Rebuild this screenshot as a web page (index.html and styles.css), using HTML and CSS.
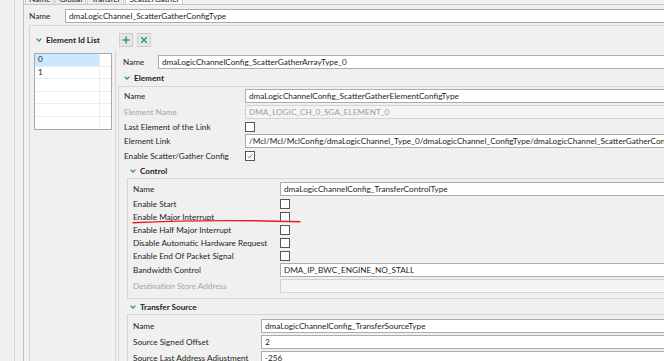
FILE: index.html
```html
<!DOCTYPE html>
<html lang="en">
<head>
    <meta charset="UTF-8">
    <title>ScatterGather</title>
    <link rel="stylesheet" href="styles.css">
</head>
<body>

<div class="main">
    <div class="content">

        <!-- Tabs (cut off at the top) -->
        <div class="tabs">
            <span class="tab">Name</span>
            <span class="tab">Global</span>
            <span class="tab">Transfer</span>
            <span class="tab active">ScatterGather</span>
        </div>

        <div class="top-row">
            <span class="top-label">Name</span>
            <input class="field" type="text" value="dmaLogicChannel_ScatterGatherConfigType" readonly>
        </div>

        <div class="group">
            <div class="group-head">
                <div class="id-heading">
                    <svg class="chev" viewBox="0 0 6 4"><path d="M0.6 0.6 L3 3 L5.4 0.6"/></svg>
                    <span>Element Id List</span>
                </div>
                <button class="tool" type="button">
                    <svg viewBox="0 0 8 8"><path d="M4 0.5 V7.5 M0.5 4 H7.5"/></svg>
                </button>
                <button class="tool" type="button">
                    <svg viewBox="0 0 8 8"><path d="M1.2 1.2 L6.8 6.8 M6.8 1.2 L1.2 6.8"/></svg>
                </button>
            </div>

            <div class="group-body">
                <div class="id-pane">
                    <div class="list">
                        <div class="list-row selected"><span class="cell">0</span><span class="cell2"></span></div>
                        <div class="list-row"><span class="cell">1</span><span class="cell2"></span></div>
                        <div class="list-row"><span class="cell"></span><span class="cell2"></span></div>
                        <div class="list-row"><span class="cell"></span><span class="cell2"></span></div>
                        <div class="list-row"><span class="cell"></span><span class="cell2"></span></div>
                        <div class="list-row"><span class="cell"></span><span class="cell2"></span></div>
                    </div>
                </div>

                <div class="details">
                    <div class="name-row">
                        <span class="name-label">Name</span>
                        <input class="field" type="text" value="dmaLogicChannelConfig_ScatterGatherArrayType_0" readonly>
                    </div>

                    <div class="section element">
                        <div class="heading">
                            <svg class="chev" viewBox="0 0 6 4"><path d="M0.6 0.6 L3 3 L5.4 0.6"/></svg>
                            <span>Element</span>
                        </div>
                        <div class="box">
                            <div class="row"><span class="label w-element">Name</span><input class="field" type="text" value="dmaLogicChannelConfig_ScatterGatherElementConfigType" readonly></div>
                            <div class="row"><span class="label w-element disabled">Element Name</span><input class="field off" type="text" value="DMA_LOGIC_CH_0_SGA_ELEMENT_0" disabled></div>
                            <div class="row cb"><span class="label w-element">Last Element of the Link</span><span class="check"></span></div>
                            <div class="row"><span class="label w-element">Element Link</span><input class="field" type="text" value="/Mcl/Mcl/MclConfig/dmaLogicChannel_Type_0/dmaLogicChannel_ConfigType/dmaLogicChannel_ScatterGatherConfigType/dmaLogicChannelConfig_ScatterGatherArrayType_0" readonly></div>
                            <div class="row cb"><span class="label w-element">Enable Scatter/Gather Config</span><span class="check"><svg viewBox="0 0 10 10"><path d="M2 5.2 L4.2 7.3 L8 2.8"/></svg></span></div>

                            <div class="section sub">
                                <div class="heading">
                                    <svg class="chev" viewBox="0 0 6 4"><path d="M0.6 0.6 L3 3 L5.4 0.6"/></svg>
                                    <span>Control</span>
                                </div>
                                <div class="box">
                                    <div class="row"><span class="label w-control">Name</span><input class="field" type="text" value="dmaLogicChannelConfig_TransferControlType" readonly></div>
                                    <div class="row cb"><span class="label w-control">Enable Start</span><span class="check"></span></div>
                                    <div class="row cb"><span class="label w-control">Enable Major Interrupt</span><span class="check"></span></div>
                                    <div class="row cb"><span class="label w-control">Enable Half Major Interrupt</span><span class="check"></span></div>
                                    <div class="row cb"><span class="label w-control">Disable Automatic Hardware Request</span><span class="check"></span></div>
                                    <div class="row cb"><span class="label w-control">Enable End Of Packet Signal</span><span class="check"></span></div>
                                    <div class="row"><span class="label w-control">Bandwidth Control</span><input class="field" type="text" value="DMA_IP_BWC_ENGINE_NO_STALL" readonly></div>
                                    <div class="row"><span class="label w-control disabled">Destination Store Address</span><input class="field off" type="text" value="" disabled></div>
                                </div>
                            </div>

                            <div class="section sub">
                                <div class="heading">
                                    <svg class="chev" viewBox="0 0 6 4"><path d="M0.6 0.6 L3 3 L5.4 0.6"/></svg>
                                    <span>Transfer Source</span>
                                </div>
                                <div class="box ts">
                                    <div class="row"><span class="label w-source">Name</span><input class="field" type="text" value="dmaLogicChannelConfig_TransferSourceType" readonly></div>
                                    <div class="row"><span class="label w-source">Source Signed Offset</span><input class="field" type="text" value="2" readonly></div>
                                    <div class="row"><span class="label w-source">Source Last Address Adjustment</span><input class="field" type="text" value="-256" readonly></div>
                                </div>
                            </div>
                        </div>
                    </div>
                </div>
            </div>
        </div>

    </div>
</div>

<!-- hand-drawn red underline -->
<svg class="ink" width="664" height="361" viewBox="0 0 664 361">
    <path d="M133 222.8 Q 210 219 300 221.8"/>
</svg>

</body>
</html>
```

FILE: styles.css
```css
/* General Styles */
body {
    margin: 0;
    width: 664px;
    height: 361px;
    overflow: hidden;
    position: relative;
    background: #f0f0f0;
    font-family: Lato, "Open Sans", sans-serif;
    font-size: 8.2px;
    color: #1e1e1e;
}

/* Outer frame lines */
.main {
    width: 1000px;
    height: 361px;
    margin-left: 14px;
    padding-left: 8px;
    border-left: 1px solid #d8d8d8;
}

.content {
    height: 361px;
    border-left: 1px solid #c4c4c4;
}

/* Tabs */
.tabs {
    height: 4px;
    overflow: hidden;
    display: flex;
    align-items: flex-end;
    padding-left: 1px;
    border-bottom: 1px solid #c8c8c8;
}

.tab {
    line-height: 9px;
    padding: 0 3px;
    margin-right: 1px;
    border: 1px solid #cfcfcf;
    border-bottom: none;
    background: #ececec;
    white-space: nowrap;
}

.tab.active {
    background: #fafafa;
}

/* Inputs */
.field {
    flex: 1;
    box-sizing: border-box;
    height: 14px;
    margin: 0;
    padding: 0 3px;
    border: 1px solid #acacac;
    background: #fff;
    font-family: inherit;
    font-size: inherit;
    color: #1e1e1e;
    outline: none;
}

.field.off {
    background: #f4f4f4;
    border-color: #d2d2d2;
    color: #a0a0a0;
}

/* Top name row */
.top-row {
    display: flex;
    align-items: center;
    margin-top: 4px;
    padding-left: 5px;
}

.top-label {
    width: 36px;
}

/* Main group box */
.group {
    margin-top: 2px;
    margin-left: 5px;
    border: 1px solid #d6d6d6;
    border-right: none;
    height: 400px;
}

.group-head {
    display: flex;
    align-items: center;
    height: 14px;
    padding-top: 7px;
}

.id-heading {
    width: 85px;
    box-sizing: border-box;
    padding-left: 6px;
    display: flex;
    align-items: center;
    gap: 4px;
    font-weight: bold;
}

.chev {
    width: 6px;
    height: 4px;
    fill: none;
    stroke: #2f8f7f;
    stroke-width: 1.3;
}

.tool {
    width: 14px;
    height: 14px;
    margin: 0 4px 0 0;
    padding: 0;
    display: flex;
    align-items: center;
    justify-content: center;
    border: 1px solid #cdcdcd;
    background: #e6e6e6;
}

.tool:first-of-type {
    margin-left: 4px;
}

.tool svg {
    width: 8px;
    height: 8px;
    fill: none;
    stroke: #2f9a6e;
    stroke-width: 1.4;
}

.group-body {
    display: flex;
    margin-top: 3px;
}

/* Element id list */
.id-pane {
    width: 85px;
    box-sizing: border-box;
    padding: 3px 3px 0 4px;
}

.list {
    border: 1px solid #a9a9a9;
    background: #fff;
    height: 75px;
    overflow: hidden;
}

.list-row {
    display: flex;
    height: 12.6px;
    box-sizing: border-box;
    border-bottom: 1px solid #ececec;
    line-height: 11.6px;
}

.list-row .cell {
    width: 65px;
    padding-left: 3px;
    box-sizing: border-box;
    border-right: 1px solid #ececec;
}

.list-row.selected .cell {
    background: #cce8ff;
}

/* Details pane */
.details {
    flex: 1;
    border-left: 1px solid #d6d6d6;
    padding-top: 5px;
}

.name-row {
    display: flex;
    align-items: center;
    padding-left: 7px;
}

.name-label {
    width: 35px;
}

.section.element {
    margin-left: 2px;
}

.heading {
    display: flex;
    align-items: center;
    gap: 4px;
    height: 17px;
    padding-left: 6px;
    font-weight: bold;
}

.section.sub {
    margin-left: 3px;
}

.section.sub .heading {
    height: 15px;
    padding-left: 3px;
}

.box {
    border: 1px solid #d6d6d6;
    border-right: none;
    padding: 2px 0 3px 5px;
}

.section.sub .box {
    padding-top: 3px;
}

.section.sub .box.ts {
    padding-top: 4px;
}

.row {
    display: flex;
    align-items: center;
    height: 14px;
    margin-bottom: 2px;
}

.row.cb {
    height: 11px;
}

.label {
    flex: none;
    white-space: nowrap;
}

.label.disabled {
    color: #a6a6a6;
}

.w-element { width: 121px; }
.w-control { width: 147px; }
.w-source { width: 128px; }

/* Checkbox */
.check {
    width: 10px;
    height: 10px;
    box-sizing: border-box;
    border: 1px solid #555;
    background: #fff;
    display: flex;
}

.check svg {
    width: 8px;
    height: 8px;
    fill: none;
    stroke: #555;
    stroke-width: 1;
}

/* Red pen mark */
.ink {
    position: absolute;
    top: 0;
    left: 0;
    pointer-events: none;
}

.ink path {
    fill: none;
    stroke: #ee1c1c;
    stroke-width: 1.4;
    stroke-linecap: round;
}
```
